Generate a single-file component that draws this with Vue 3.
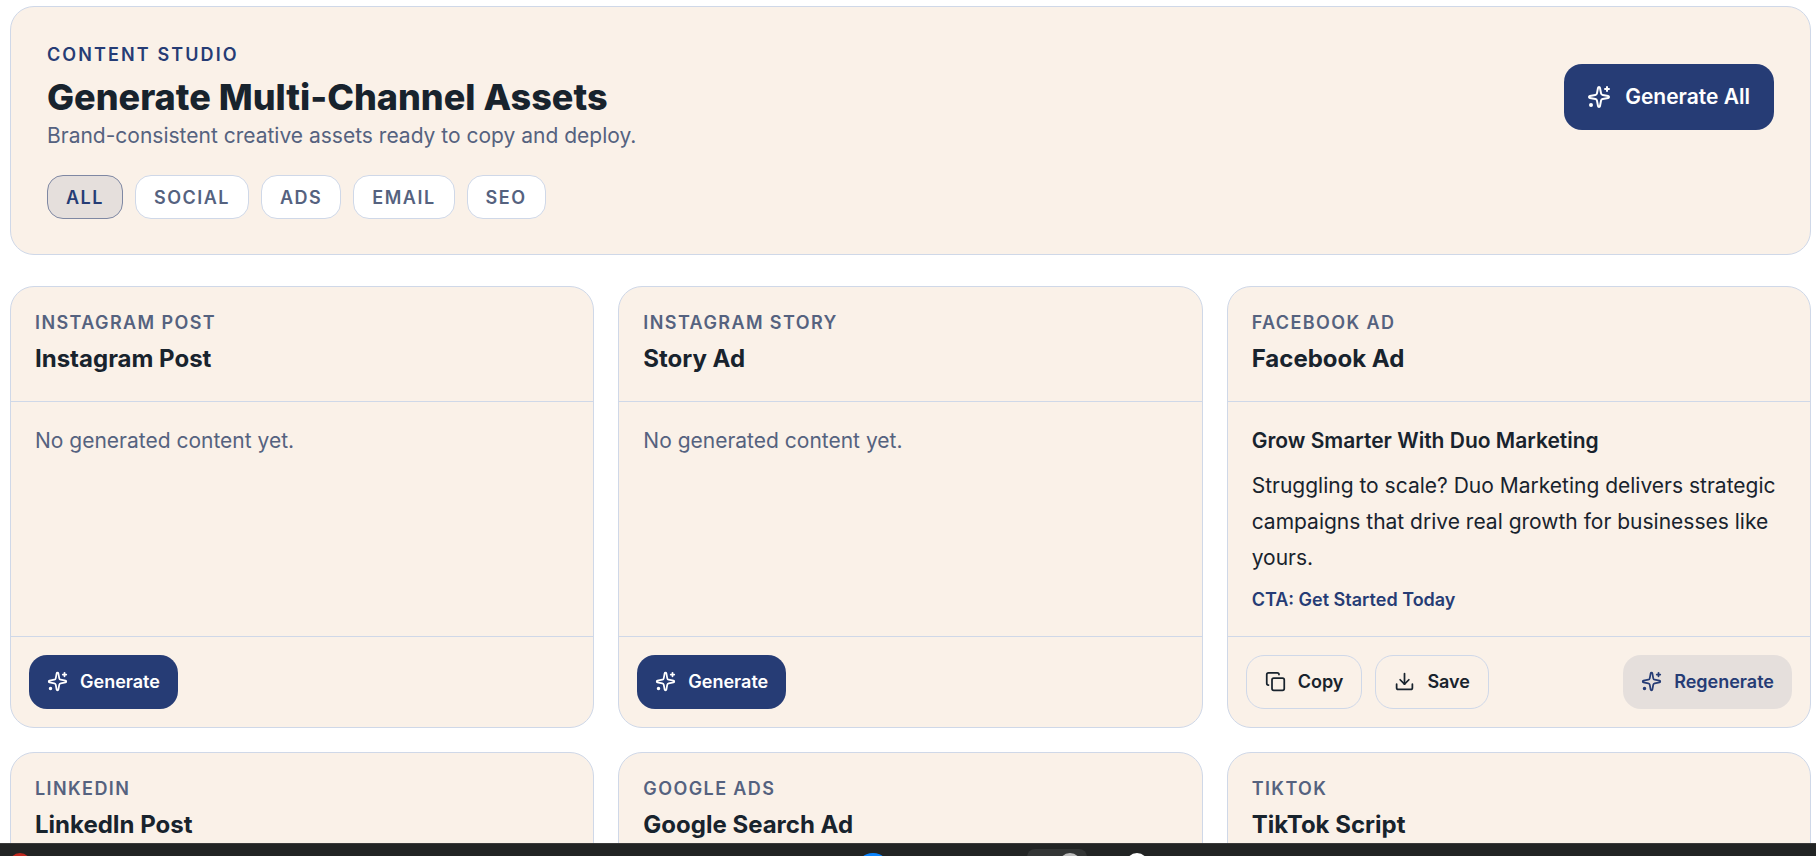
<template>
    <div class="studio">
        <section class="hero">
            <div class="heroText">
                <div class="eyebrow">CONTENT STUDIO</div>
                <h1>Generate Multi-Channel Assets</h1>
                <p class="subtitle">Brand-consistent creative assets ready to copy and deploy.</p>
                <div class="chips">
                    <button
                        v-for="chip in chips"
                        :key="chip"
                        class="chip"
                        :class="{ active: chip === 'ALL' }"
                    >{{ chip }}</button>
                </div>
            </div>
            <button class="btn primary big">
                <svg class="icon bigIcon" viewBox="0 0 24 24"><path :d="sparkle" /><path d="M20 2v4" /><path d="M22 4h-4" /><circle class="iconDot" cx="4" cy="20" r="1" /></svg>
                <span>Generate All</span>
            </button>
        </section>

        <div class="grid">
            <article v-for="card in cards" :key="card.title" class="card">
                <header class="cardHead">
                    <div class="cardLabel">{{ card.label }}</div>
                    <h2>{{ card.title }}</h2>
                </header>
                <div class="cardBody">
                    <template v-if="card.content">
                        <div class="headline">{{ card.content.headline }}</div>
                        <p class="copy">{{ card.content.text }}</p>
                        <div class="cta">{{ card.content.cta }}</div>
                    </template>
                    <p v-else class="empty">No generated content yet.</p>
                </div>
                <footer class="cardFoot">
                    <template v-if="card.content">
                        <button class="btn outline">
                            <svg class="icon" viewBox="0 0 24 24"><rect x="8" y="8" width="14" height="14" rx="2" ry="2" /><path d="M4 16c-1.1 0-2-.9-2-2V4c0-1.1.9-2 2-2h10c1.1 0 2 .9 2 2" /></svg>
                            <span>Copy</span>
                        </button>
                        <button class="btn outline">
                            <svg class="icon" viewBox="0 0 24 24"><path d="M12 15V3" /><path d="M21 15v4a2 2 0 0 1-2 2H5a2 2 0 0 1-2-2v-4" /><path d="m7 10 5 5 5-5" /></svg>
                            <span>Save</span>
                        </button>
                        <button class="btn soft">
                            <svg class="icon" viewBox="0 0 24 24"><path :d="sparkle" /><path d="M20 2v4" /><path d="M22 4h-4" /><circle class="iconDot" cx="4" cy="20" r="1" /></svg>
                            <span>Regenerate</span>
                        </button>
                    </template>
                    <button v-else class="btn primary">
                        <svg class="icon" viewBox="0 0 24 24"><path :d="sparkle" /><path d="M20 2v4" /><path d="M22 4h-4" /><circle class="iconDot" cx="4" cy="20" r="1" /></svg>
                        <span>Generate</span>
                    </button>
                </footer>
            </article>
        </div>

        <div class="taskbar">
            <span class="dot red"></span>
            <span class="dot blue"></span>
            <span class="toggle"><span class="knob"></span></span>
            <span class="dot white"></span>
        </div>
    </div>
</template>

<script setup>
    const sparkle = 'M11.017 2.814a1 1 0 0 1 1.966 0l1.051 5.558a2 2 0 0 0 1.594 1.594l5.558 1.051a1 1 0 0 1 0 1.966l-5.558 1.051a2 2 0 0 0-1.594 1.594l-1.051 5.558a1 1 0 0 1-1.966 0l-1.051-5.558a2 2 0 0 0-1.594-1.594l-5.558-1.051a1 1 0 0 1 0-1.966l5.558-1.051a2 2 0 0 0 1.594-1.594z';

    const chips = ['ALL', 'SOCIAL', 'ADS', 'EMAIL', 'SEO'];

    const cards = [
        { label: 'INSTAGRAM POST', title: 'Instagram Post' },
        { label: 'INSTAGRAM STORY', title: 'Story Ad' },
        {
            label: 'FACEBOOK AD',
            title: 'Facebook Ad',
            content: {
                headline: 'Grow Smarter With Duo Marketing',
                text: 'Struggling to scale? Duo Marketing delivers strategic campaigns that drive real growth for businesses like yours.',
                cta: 'CTA: Get Started Today'
            }
        },
        { label: 'LINKEDIN', title: 'LinkedIn Post' },
        { label: 'GOOGLE ADS', title: 'Google Search Ad' },
        { label: 'TIKTOK', title: 'TikTok Script' }
    ];
</script>

<style>
    html, body {
        margin: 0;
        height: 100%;
        overflow: hidden;
        background: #ffffff;
    }
</style>

<style scoped>
    .studio {
        height: 856px;
        overflow: hidden;
        padding: 6px 5px 0 10px;
        box-sizing: border-box;
        position: relative;
        font-family: Inter, "Liberation Sans", sans-serif;
        color: #18232d;
    }

    .hero {
        display: flex;
        justify-content: space-between;
        align-items: flex-start;
        padding: 38px 36px 36px 36px;
        background-color: #faf1e8;
        border: 1px solid #cfd8e8;
        border-radius: 24px;
        height: 249px;
        box-sizing: border-box;
        margin-bottom: 31px;
    }

    .eyebrow {
        font-size: 18px;
        line-height: 20px;
        font-weight: 600;
        letter-spacing: 2.1px;
        color: #263c75;
    }

    h1 {
        margin: 9px 0 0;
        font-size: 36px;
        line-height: 47px;
        font-weight: 800;
        color: #18232d;
    }

    .subtitle {
        margin: 0;
        font-size: 21px;
        line-height: 30px;
        color: #55627f;
    }

    .chips {
        display: flex;
        gap: 12px;
        margin-top: 24px;
    }

    .chip {
        height: 44px;
        padding: 0 18px;
        font-family: inherit;
        font-size: 18px;
        font-weight: 600;
        letter-spacing: 1.5px;
        color: #55627f;
        background-color: #ffffff;
        border: 1px solid #cfd8e8;
        border-radius: 16px;
    }

    .chip.active {
        color: #263c75;
        background-color: #e5dfdc;
        border-color: #7f88a3;
    }

    .grid {
        display: grid;
        grid-template-columns: repeat(3, 1fr);
        gap: 24px;
    }

    .card {
        display: flex;
        flex-direction: column;
        height: 442px;
        box-sizing: border-box;
        background-color: #faf1e8;
        border: 1px solid #cfd8e8;
        border-radius: 24px;
    }

    .cardHead {
        height: 115px;
        box-sizing: border-box;
        flex-shrink: 0;
        padding: 25px 24px 0;
        border-bottom: 1px solid #cfd8e8;
    }

    .cardLabel {
        font-size: 18px;
        line-height: 22px;
        font-weight: 600;
        letter-spacing: 1.4px;
        color: #55627f;
    }

    h2 {
        margin: 9px 0 0;
        font-size: 24px;
        line-height: 32px;
        font-weight: 700;
        color: #18232d;
    }

    .cardBody {
        flex: 1;
        padding: 24px;
    }

    .empty {
        margin: 0;
        font-size: 21px;
        line-height: 30px;
        color: #55627f;
    }

    .headline {
        font-size: 21px;
        line-height: 30px;
        font-weight: 600;
    }

    .copy {
        margin: 12px 0 0;
        font-size: 21px;
        line-height: 36px;
    }

    .cta {
        margin-top: 12px;
        font-size: 18px;
        line-height: 24px;
        font-weight: 600;
        color: #263c75;
    }

    .cardFoot {
        display: flex;
        gap: 13px;
        height: 91px;
        box-sizing: border-box;
        flex-shrink: 0;
        padding: 18px;
        border-top: 1px solid #cfd8e8;
    }

    .btn {
        display: inline-flex;
        align-items: center;
        gap: 12px;
        height: 54px;
        padding: 0 17px 1px;
        font-family: inherit;
        font-size: 18px;
        font-weight: 600;
        border-radius: 18px;
        border: 1px solid transparent;
        box-sizing: border-box;
    }

    .btn.primary {
        color: #ffffff;
        background-color: #263c75;
    }

    .btn.big {
        height: 66px;
        padding: 0 23px 1px 22px;
        margin-top: 19px;
        font-size: 21px;
        gap: 14px;
    }

    .btn.outline {
        padding: 0 18px 1px;
        color: #18232d;
        background-color: transparent;
        border-color: #cfd8e8;
    }

    .btn.soft {
        margin-left: auto;
        color: #263c75;
        background-color: #e5dfdc;
    }

    .icon {
        width: 21px;
        height: 21px;
        flex-shrink: 0;
        fill: none;
        stroke: currentColor;
        stroke-width: 2;
        stroke-linecap: round;
        stroke-linejoin: round;
    }

    .iconDot {
        fill: currentColor;
    }

    .bigIcon {
        width: 24px;
        height: 24px;
    }

    .taskbar {
        position: absolute;
        left: 0;
        right: 0;
        bottom: 0;
        height: 13px;
        background-color: #222424;
        border-top: 1px solid #3a3a3a;
        box-sizing: border-box;
        overflow: hidden;
    }

    .dot {
        position: absolute;
        top: 9px;
        border-radius: 50%;
    }

    .red {
        left: 9px;
        width: 22px;
        height: 22px;
        background-color: #c0291f;
    }

    .blue {
        left: 856px;
        width: 34px;
        height: 34px;
        background-color: #0a84ff;
    }

    .white {
        left: 1126px;
        width: 22px;
        height: 22px;
        background-color: #ffffff;
    }

    .toggle {
        position: absolute;
        left: 1027px;
        top: 5px;
        width: 60px;
        height: 20px;
        background-color: #333535;
        border-radius: 8px;
    }

    .knob {
        position: absolute;
        right: 6px;
        top: 4px;
        width: 22px;
        height: 22px;
        border-radius: 50%;
        background-color: #bdbdbd;
    }
</style>
